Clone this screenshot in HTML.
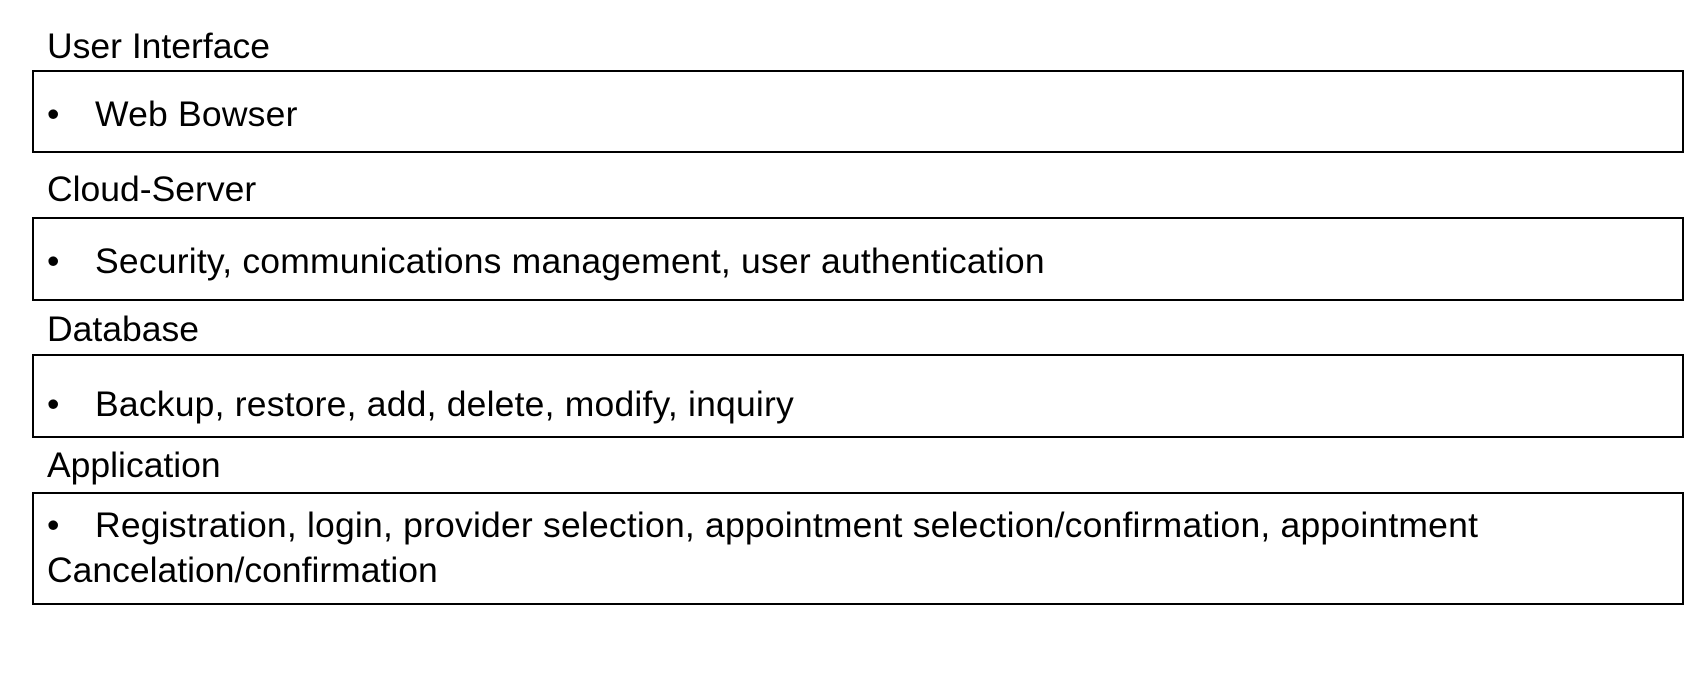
<!DOCTYPE html>
<html><head><style>
html,body{margin:0;padding:0;background:#fff;}
body{width:1706px;height:686px;position:relative;overflow:hidden;font-family:"Liberation Sans",sans-serif;color:#000;font-size:35.5px;}
.l{position:absolute;left:47px;line-height:36px;white-space:nowrap;}
.b{position:absolute;left:32px;width:1652px;border:2px solid #000;box-sizing:border-box;}
.t{position:absolute;left:95px;line-height:36px;white-space:nowrap;letter-spacing:0.2px;}
.d{position:absolute;left:47px;line-height:36px;}
</style></head><body>
<div class="l" style="top:28px">User Interface</div>
<div class="b" style="top:70px;height:83px"></div>
<div class="d" style="top:96px">•</div><div class="t" style="top:96px">Web Bowser</div>

<div class="l" style="top:171px">Cloud-Server</div>
<div class="b" style="top:217px;height:84px"></div>
<div class="d" style="top:243px">•</div><div class="t" style="top:243px">Security, communications management, user authentication</div>

<div class="l" style="top:311px">Database</div>
<div class="b" style="top:354px;height:84px"></div>
<div class="d" style="top:386px">•</div><div class="t" style="top:386px">Backup, restore, add, delete, modify, inquiry</div>

<div class="l" style="top:447px">Application</div>
<div class="b" style="top:492px;height:113px"></div>
<div class="d" style="top:507px">•</div><div class="t" style="top:507px">Registration, login, provider selection, appointment selection/confirmation, appointment</div>
<div class="l" style="top:552px">Cancelation/confirmation</div>
</body></html>
